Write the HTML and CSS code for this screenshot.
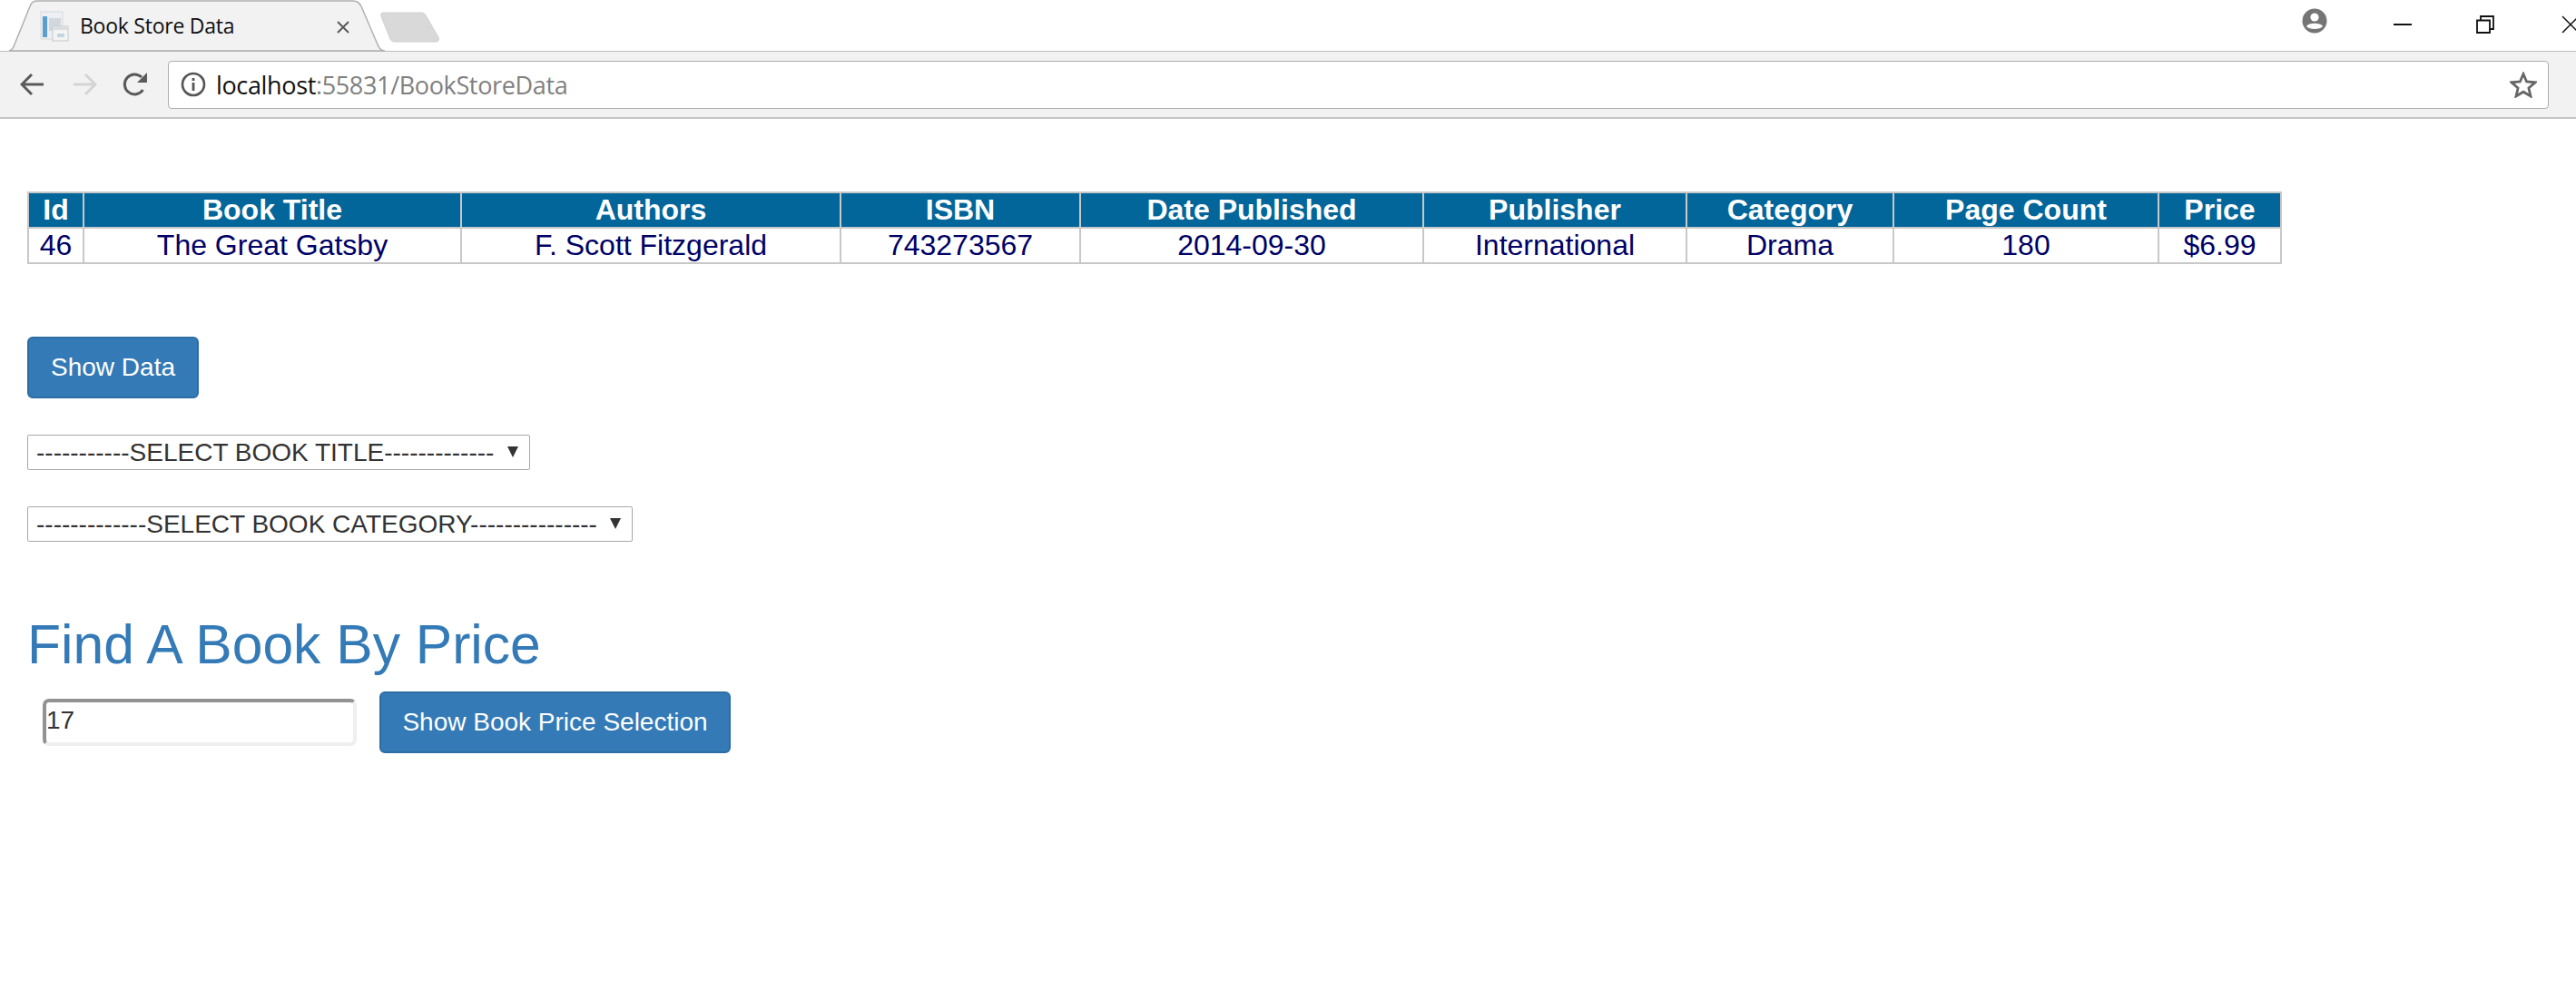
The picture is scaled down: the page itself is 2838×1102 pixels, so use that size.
FILE: index.html
```html
<!DOCTYPE html>
<html lang="en">
<head>
<meta charset="utf-8">
<title>Book Store Data</title>
<link rel="stylesheet" href="styles.css">
</head>
<body>
<header class="chrome">
  <div class="tabstrip">
    <svg class="tab-shape" width="440" height="57" viewBox="0 0 440 57"><path d="M10 56 C14 55 15 52 16 49 L33 7 C35 2 37 1 42 1 L389 1 C394 1 396 3 398 7 L416 49 C418 54 420 56 424 56 Z" fill="#f2f2f2" stroke="#b0b0b0" stroke-width="1.5"/></svg>
    <div class="tab">
      <svg class="favicon" width="32" height="34" viewBox="0 0 32 34"><rect x="1" y="1" width="24" height="30" fill="#eceff3" stroke="#d5d9de"/><rect x="3" y="6" width="5" height="23" fill="#5a9fd0"/><rect x="10" y="8" width="13" height="14" fill="#d3d8de"/><rect x="14" y="17" width="17" height="16" fill="#f4f4f4" stroke="#c4c8cc"/><rect x="14" y="17" width="17" height="4" fill="#dcdfe2"/><rect x="19" y="25" width="8" height="4" fill="#c3d6e4"/></svg>
      <span class="tab-title">Book Store Data</span>
      <svg class="tab-close" width="14" height="14" viewBox="0 0 14 14"><path d="M1 1 L13 13 M13 1 L1 13" stroke="#555" stroke-width="1.8"/></svg>
    </div>
    <svg class="newtab" width="66" height="34" viewBox="0 0 66 34"><path d="M4 1 L45 1 C48 1 49 2 50 4 L64 28 C65 31 64 33 61 33 L16 33 C13 33 12 32 11 30 L1 5 C0 2 1 1 4 1 Z" fill="#d9d9d9" stroke="#cfcfcf"/></svg>
    <div class="window-controls">
      <svg class="profile" width="28" height="28" viewBox="0 0 28 28"><circle cx="14" cy="14" r="13.5" fill="#757575"/><circle cx="14" cy="10" r="4.6" fill="#fff"/><path d="M5 20 C7 15.5 21 15.5 23 20 C20 24 8 24 5 20 Z" fill="#fff"/></svg>
      <svg class="win-min" width="20" height="2" viewBox="0 0 20 2"><rect width="20" height="2" fill="#111"/></svg>
      <svg class="win-restore" width="20" height="20" viewBox="0 0 20 20"><path d="M1 5.5 H15 V19 H1 Z M5 5 V1 H19 V15 H15" fill="none" stroke="#111" stroke-width="1.8"/></svg>
      <svg class="win-close" width="20" height="20" viewBox="0 0 20 20"><path d="M1 1 L19 19 M19 1 L1 19" stroke="#111" stroke-width="1.5"/></svg>
    </div>
  </div>
  <div class="toolbar">
    <svg class="nav-back" width="28" height="26" viewBox="0 0 28 26"><path d="M26 13 H3 M13 2 L2 13 L13 24" fill="none" stroke="#5a5a5a" stroke-width="3"/></svg>
    <svg class="nav-forward" width="28" height="26" viewBox="0 0 28 26"><path d="M2 13 H25 M15 2 L26 13 L15 24" fill="none" stroke="#d4d4d4" stroke-width="3"/></svg>
    <svg class="nav-reload" width="28" height="28" viewBox="0 0 28 28"><path d="M22.5 20 A11 11 0 1 1 21 6" fill="none" stroke="#5a5a5a" stroke-width="3"/><path d="M27 1 V12 H16 Z" fill="#5a5a5a"/></svg>
    <div class="omnibox">
      <svg class="info" width="28" height="28" viewBox="0 0 28 28"><circle cx="14" cy="14" r="12" fill="none" stroke="#555" stroke-width="2.6"/><rect x="12.6" y="12" width="2.8" height="9" fill="#555"/><rect x="12.6" y="7" width="2.8" height="3" fill="#555"/></svg>
      <span class="url"><span class="host">localhost</span>:55831/BookStoreData</span>
      <svg class="star" width="30" height="29" viewBox="0 0 30 29"><path d="M15 2.5 L18.6 11 L28 11.8 L20.9 18 L23 27 L15 22.2 L7 27 L9.1 18 L2 11.8 L11.4 11 Z" fill="none" stroke="#666" stroke-width="2.8"/></svg>
    </div>
  </div>
</header>
<main class="page">
  <table class="books">
    <colgroup>
      <col class="c-id"><col class="c-title"><col class="c-authors"><col class="c-isbn"><col class="c-date"><col class="c-pub"><col class="c-cat"><col class="c-pages"><col class="c-price">
    </colgroup>
    <thead>
      <tr><th>Id</th><th>Book Title</th><th>Authors</th><th>ISBN</th><th>Date Published</th><th>Publisher</th><th>Category</th><th>Page Count</th><th>Price</th></tr>
    </thead>
    <tbody>
      <tr><td>46</td><td>The Great Gatsby</td><td>F. Scott Fitzgerald</td><td>743273567</td><td>2014-09-30</td><td>International</td><td>Drama</td><td>180</td><td>$6.99</td></tr>
    </tbody>
  </table>
  <button class="btn btn-show" type="button">Show Data</button>
  <div class="select-wrap first">
    <select class="picker picker-title"><option>-----------SELECT BOOK TITLE-------------</option></select>
    <span class="caret"></span>
  </div>
  <div class="select-wrap second">
    <select class="picker picker-cat"><option>-------------SELECT BOOK CATEGORY---------------</option></select>
    <span class="caret"></span>
  </div>
  <h2 class="heading">Find A Book By Price</h2>
  <div class="price-row">
    <input class="price-input" type="text" value="17">
    <button class="btn btn-price" type="button">Show Book Price Selection</button>
  </div>
</main>
</body>
</html>
```
FILE: styles.css
```css
* { box-sizing: border-box; }
html, body { margin: 0; padding: 0; background: #fff; }
body { font-family: "Liberation Sans", Arial, sans-serif; width: 2838px; height: 1102px; overflow: hidden; }

.chrome { height: 131px; }
.tabstrip { height: 57px; position: relative; display: flex; border-bottom: 1.5px solid #bdbdbd; }
.tab-shape { position: absolute; left: 0; top: 0; }
.tab { position: relative; width: 420px; display: flex; align-items: center; padding-left: 44px; height: 56px; flex: none; }
.favicon { flex: none; margin-top: 2px; }
.tab-title { font-family: "Open Sans", sans-serif; font-size: 23px; color: #111; margin-left: 12px; width: 280px; white-space: nowrap; letter-spacing: -0.25px; }
.tab-close { position: absolute; left: 371px; top: 23px; }
.newtab { position: absolute; left: 419px; top: 13px; }
.window-controls { position: absolute; inset: 0; }
.profile { position: absolute; left: 2536px; top: 9px; }
.win-min { position: absolute; left: 2637px; top: 26px; }
.win-restore { position: absolute; left: 2728px; top: 17px; }
.win-close { position: absolute; left: 2822px; top: 17px; }

.toolbar { height: 74px; background: #f2f2f2; border-bottom: 2px solid #c4c4c4; display: flex; align-items: center; padding-left: 22px; }
.nav-back { flex: none; }
.nav-forward { flex: none; margin-left: 29px; }
.nav-reload { flex: none; margin-left: 28px; }
.omnibox { flex: none; width: 2623px; height: 53px; margin-left: 22px; background: #fff; border: 1.5px solid #adadad; border-radius: 4px; display: flex; align-items: center; padding-left: 13px; }
.info { flex: none; }
.url { font-family: "Open Sans", sans-serif; font-size: 27px; color: #808080; margin-left: 11px; letter-spacing: -0.35px; flex: 1; white-space: nowrap; }
.host { color: #111; }
.star { flex: none; margin-right: 12px; }

.page { padding: 80px 0 0 30px; }
.books { border-collapse: collapse; table-layout: fixed; width: 2482px; font-size: 32px; line-height: 37px; text-align: center; }
.books th, .books td { border: 2px solid #c8c8c8; padding: 0; height: 39px; }
.books th { background: #03669a; color: #fff; font-weight: 700; }
.books td { color: #000066; }
.c-id { width: 61px; } .c-title { width: 416px; } .c-authors { width: 418px; } .c-isbn { width: 264px; }
.c-date { width: 378px; } .c-pub { width: 290px; } .c-cat { width: 228px; } .c-pages { width: 292px; } .c-price { width: 135px; }

.btn { display: block; font-family: "Liberation Sans", Arial, sans-serif; font-size: 28px; color: #fff; background: #337ab7; border: 2px solid #2e6da4; border-radius: 6px; padding: 0; height: 68px; }
.btn-show { width: 189px; margin-top: 80px; }

.select-wrap { position: relative; }
.select-wrap.first { margin-top: 40px; width: 554px; height: 39px; }
.select-wrap.second { margin-top: 40px; width: 667px; height: 39px; }
.picker { appearance: none; -webkit-appearance: none; display: block; width: 100%; height: 100%; font-family: "Liberation Sans", Arial, sans-serif; font-size: 28px; color: #333; background: #fff; border: 1.5px solid #a9a9a9; border-radius: 2px; padding: 0 0 0 9px; }
.caret { position: absolute; right: 13px; top: 13px; width: 0; height: 0; border-left: 6px solid transparent; border-right: 6px solid transparent; border-top: 12px solid #333; pointer-events: none; }

.heading { font-size: 60.6px; font-weight: 400; line-height: 66px; color: #337ab7; margin: 80px 0 0 0; }
.price-row { display: flex; align-items: center; margin-top: 19px; padding-left: 17px; }
.price-input { width: 346px; height: 52px; font-family: "Liberation Sans", Arial, sans-serif; font-size: 28px; color: #333; padding: 0 0 4px; border: 4px solid #efefef; border-top-color: #929292; border-left-color: #929292; border-radius: 7px; background: #fff; outline: none; }
.btn-price { width: 387px; margin-left: 25px; }
```
